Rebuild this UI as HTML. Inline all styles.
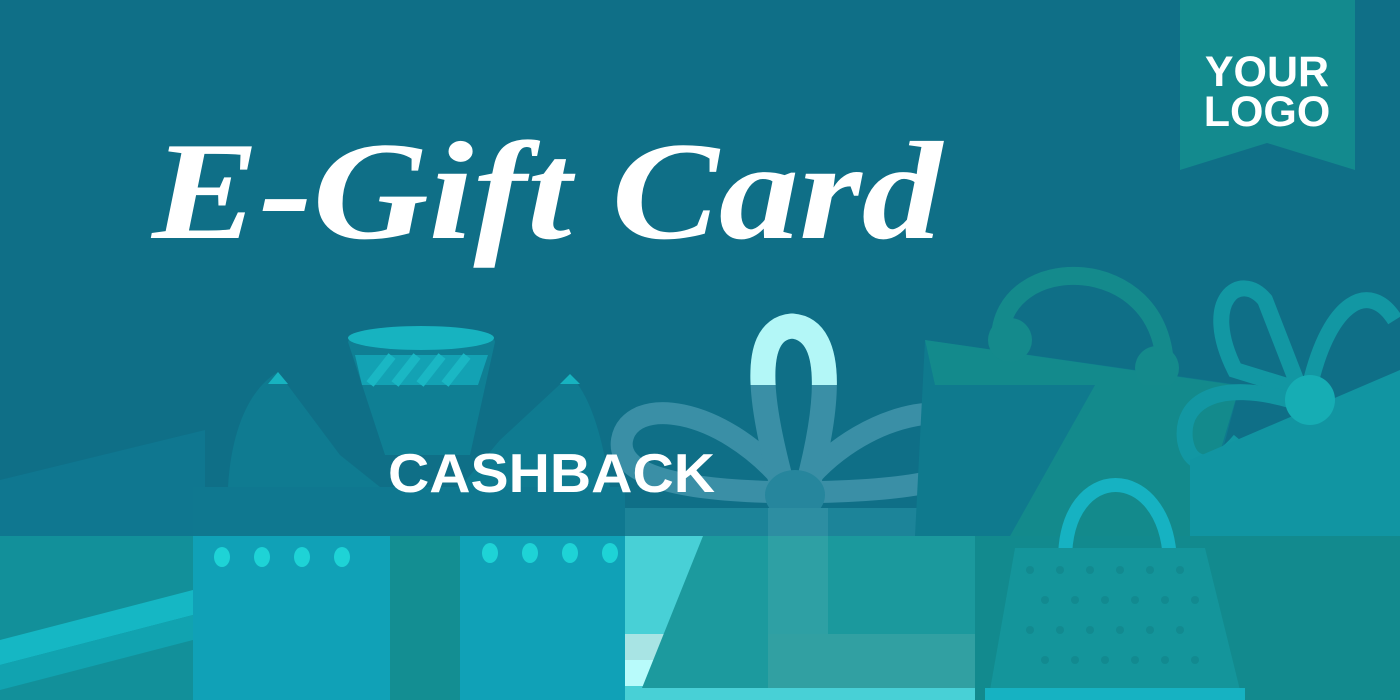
<!DOCTYPE html>
<html><head><style>
html,body{margin:0;padding:0;width:1400px;height:700px;overflow:hidden;background:#0f6f87}
svg{display:block}
</style></head><body>
<svg width="1400" height="700" viewBox="0 0 1400 700" xmlns="http://www.w3.org/2000/svg">
<defs><clipPath id="top"><rect x="0" y="0" width="1400" height="385"/></clipPath></defs>
<rect width="1400" height="700" fill="#0f6f87"/>
<!-- left background box -->
<polygon points="0,480 205,430 205,540 0,540" fill="#0f7790"/>
<!-- box1 bow -->
<path d="M228,487 C232,420 255,385 278,372 L340,455 L380,487 Z" fill="#0f7b91"/>
<path d="M610,487 C600,420 585,390 570,375 L500,440 L460,487 Z" fill="#0f7b91"/>
<polygon points="268,384 278,372 288,384" fill="#17b3c0"/>
<polygon points="560,384 570,374 580,384" fill="#17b3c0"/>
<path d="M348,342 C350,325 495,325 495,342 L470,455 L385,455 Z" fill="#0f7f94"/>
<ellipse cx="421" cy="338" rx="73" ry="12" fill="#17b3c0"/>
<polygon points="355,355 488,355 478,385 362,385" fill="#13a2b4"/>
<g stroke="#1ab7c4" stroke-width="9"><line x1="370" y1="384" x2="392" y2="356"/><line x1="395" y1="384" x2="417" y2="356"/><line x1="420" y1="384" x2="442" y2="356"/><line x1="445" y1="384" x2="467" y2="356"/></g>
<!-- box1 top -->
<rect x="193" y="487" width="432" height="50" fill="#0f7890"/>
<!-- box2 bow -->
<g fill="none" stroke="#3a8fa6" stroke-width="22">
<path d="M785,482 C720,405 630,395 622,440 C616,478 690,490 772,492"/>
<path d="M805,482 C870,405 975,395 983,440 C989,478 915,490 820,492"/>
<path d="M782,485 C765,420 745,330 792,326 C840,330 825,420 808,485" stroke-width="25"/>
</g>
<path d="M782,485 C765,420 745,330 792,326 C840,330 825,420 808,485" fill="none" stroke="#b3f7f7" stroke-width="25" clip-path="url(#top)"/>
<ellipse cx="795" cy="495" rx="30" ry="25" fill="#26869d"/>
<rect x="625" y="508" width="350" height="30" fill="#1c8499"/>
<rect x="768" y="508" width="60" height="30" fill="#2d8ea2"/>
<!-- bags right upper -->
<path d="M1000,340 C1000,250 1165,250 1165,370" fill="none" stroke="#148a8c" stroke-width="18"/>
<polygon points="925,340 1240,385 1200,536 915,536" fill="#0f7a8e"/>
<polygon points="925,340 1235,385 935,385" fill="#138a8c"/>
<circle cx="1010" cy="340" r="22" fill="#148a8c"/>
<circle cx="1157" cy="368" r="22" fill="#148a8c"/>
<polygon points="1095,385 1240,385 1195,536 1010,536" fill="#138a8c"/>
<!-- right gift -->
<path d="M1235,370 C1200,300 1240,270 1265,300 L1300,390 Z" fill="none" stroke="#1297a3" stroke-width="16"/>
<path d="M1310,385 C1330,300 1370,280 1395,320" fill="none" stroke="#1297a3" stroke-width="16"/>
<path d="M1290,400 C1220,380 1180,400 1185,440 C1190,470 1215,470 1240,440" fill="none" stroke="#1297a3" stroke-width="16"/>
<polygon points="1190,460 1400,370 1400,536 1190,536" fill="#1195a2"/>
<ellipse cx="1310" cy="400" rx="25" ry="25" fill="#16adb4"/>
<!-- bottom band -->
<rect x="0" y="536" width="193" height="164" fill="#12909a"/>
<polygon points="0,640 193,590 193,615 0,665" fill="#15b7c4"/>
<polygon points="0,665 193,615 193,640 0,690" fill="#11a3b0"/>
<rect x="193" y="536" width="197" height="164" fill="#10a1b7"/>
<rect x="390" y="536" width="70" height="164" fill="#138e92"/>
<rect x="460" y="536" width="165" height="164" fill="#10a1b7"/>
<g fill="#1ed3d6"><ellipse cx="222" cy="557" rx="8" ry="10"/><ellipse cx="262" cy="557" rx="8" ry="10"/><ellipse cx="302" cy="557" rx="8" ry="10"/><ellipse cx="342" cy="557" rx="8" ry="10"/><ellipse cx="490" cy="553" rx="8" ry="10"/><ellipse cx="530" cy="553" rx="8" ry="10"/><ellipse cx="570" cy="553" rx="8" ry="10"/><ellipse cx="610" cy="553" rx="8" ry="10"/></g>
<rect x="625" y="536" width="350" height="164" fill="#48d0d6"/>
<rect x="625" y="634" width="350" height="26" fill="#a8e4e4"/>
<rect x="625" y="660" width="350" height="26" fill="#b8fbfb"/>
<rect x="710" y="634" width="265" height="54" fill="#31a0a2"/>
<rect x="710" y="536" width="265" height="98" fill="#1b999d"/>
<rect x="768" y="536" width="60" height="98" fill="#2ea0a4"/>
<polygon points="703,536 768,536 768,688 642,688" fill="#1c9a9e"/>
<rect x="975" y="536" width="425" height="164" fill="#128a8e"/>
<path d="M1065,560 C1065,460 1165,460 1170,560" fill="none" stroke="#16b2c2" stroke-width="14"/>
<polygon points="1015,548 1205,548 1240,690 990,690" fill="#14959b"/>
<g fill="#128a90">
<circle cx="1030" cy="570" r="4"/><circle cx="1060" cy="570" r="4"/><circle cx="1090" cy="570" r="4"/><circle cx="1120" cy="570" r="4"/><circle cx="1150" cy="570" r="4"/><circle cx="1180" cy="570" r="4"/>
<circle cx="1045" cy="600" r="4"/><circle cx="1075" cy="600" r="4"/><circle cx="1105" cy="600" r="4"/><circle cx="1135" cy="600" r="4"/><circle cx="1165" cy="600" r="4"/><circle cx="1195" cy="600" r="4"/>
<circle cx="1030" cy="630" r="4"/><circle cx="1060" cy="630" r="4"/><circle cx="1090" cy="630" r="4"/><circle cx="1120" cy="630" r="4"/><circle cx="1150" cy="630" r="4"/><circle cx="1180" cy="630" r="4"/>
<circle cx="1045" cy="660" r="4"/><circle cx="1075" cy="660" r="4"/><circle cx="1105" cy="660" r="4"/><circle cx="1135" cy="660" r="4"/><circle cx="1165" cy="660" r="4"/><circle cx="1195" cy="660" r="4"/>
</g>
<rect x="985" y="688" width="260" height="12" fill="#16b2c2"/>
<!-- logo -->
<polygon points="1180,0 1355,0 1355,170 1267,143 1180,170" fill="#138a8e"/>
<text x="1267" y="86" text-anchor="middle" font-family="Liberation Sans, sans-serif" font-weight="bold" font-size="43" fill="#fff">YOUR</text>
<text x="1267" y="126" text-anchor="middle" font-family="Liberation Sans, sans-serif" font-weight="bold" font-size="43" fill="#fff">LOGO</text>
<!-- titles -->
<text x="152" y="238" font-family="Liberation Serif, serif" font-style="italic" font-weight="bold" font-size="140" fill="#fff" textLength="790" lengthAdjust="spacingAndGlyphs">E-Gift Card</text>
<text x="388" y="492" font-family="Liberation Sans, sans-serif" font-weight="bold" font-size="55" fill="#fff" textLength="327" lengthAdjust="spacingAndGlyphs">CASHBACK</text>
</svg>
</body></html>
